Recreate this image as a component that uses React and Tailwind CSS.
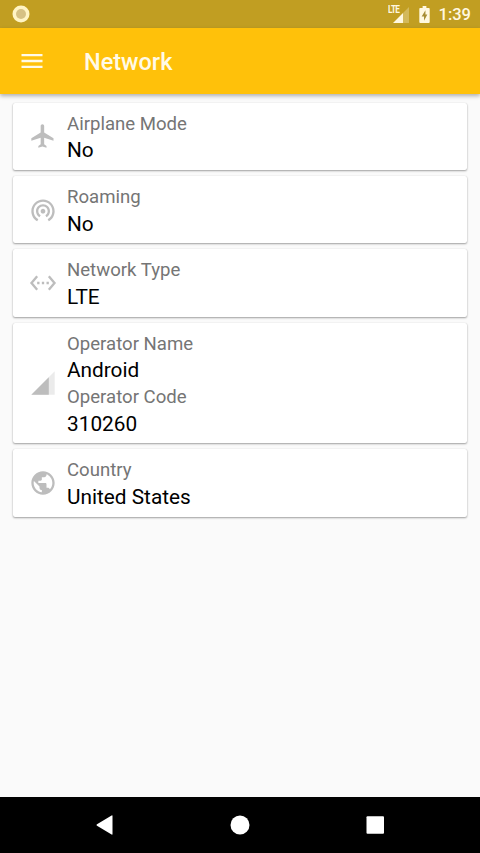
import React from 'react';

const ICONS = {
    airplane: 'M21 16v-2l-8-5V3.5c0-.83-.67-1.5-1.5-1.5S10 2.67 10 3.5V9l-8 5v2l8-2.5V19l-2 1.5V22l3.5-1 3.5 1v-1.5L13 19v-5.5l8 2.5z',
    tethering: 'M12 11c-1.1 0-2 .9-2 2s.9 2 2 2 2-.9 2-2-.9-2-2-2zm6 2c0-3.31-2.69-6-6-6s-6 2.69-6 6c0 2.22 1.21 4.15 3 5.19l1-1.74c-1.19-.7-2-1.97-2-3.45 0-2.21 1.79-4 4-4s4 1.79 4 4c0 1.48-.81 2.75-2 3.45l1 1.74c1.79-1.04 3-2.97 3-5.19zM12 3C6.48 3 2 7.48 2 13c0 3.7 2.01 6.92 4.99 8.65l1-1.73C5.61 18.53 4 15.96 4 13c0-4.42 3.58-8 8-8s8 3.58 8 8c0 2.96-1.61 5.53-4 6.92l1 1.73c2.99-1.73 5-4.95 5-8.65 0-5.52-4.48-10-10-10z',
    ethernet: 'M7.77 6.76L6.23 5.48.82 12l5.41 6.52 1.54-1.28L3.42 12l4.35-5.24zM7 13h2v-2H7v2zm10-2h-2v2h2v-2zm-6 2h2v-2h-2v2zm6.77-7.52l-1.54 1.28L20.58 12l-4.35 5.24 1.54 1.28L23.18 12l-5.41-6.52z',
    signal: 'M17 7L2 22h15z',
    globe: 'M12 2C6.48 2 2 6.48 2 12s4.48 10 10 10 10-4.48 10-10S17.52 2 12 2zm-1 17.93c-3.95-.49-7-3.85-7-7.93 0-.62.08-1.21.21-1.79L9 15v1c0 1.1.9 2 2 2v1.93zm6.9-2.54c-.26-.81-1-1.39-1.9-1.39h-1v-3c0-.55-.45-1-1-1H8v-2h2c.55 0 1-.45 1-1V7h2c1.1 0 2-.9 2-2v-.41c2.93 1.19 5 4.06 5 7.41 0 2.08-.8 3.97-2.1 5.39z',
};

const CARDS = [
    { icon: 'airplane', rows: [['Airplane Mode', 'No']] },
    { icon: 'tethering', rows: [['Roaming', 'No']] },
    { icon: 'ethernet', rows: [['Network Type', 'LTE']] },
    { icon: 'signal', rows: [['Operator Name', 'Android'], ['Operator Code', '310260']] },
    { icon: 'globe', rows: [['Country', 'United States']] },
];

const StatusBar = () => (
    <div className="h-7 shrink-0 bg-[#c19e22] flex items-center pl-3 pr-[9px] text-[#fff8e0]">
        <svg className="w-[18px] h-[18px]" viewBox="0 0 18 18">
            <circle cx="9" cy="9" r="8.5" fill="#fff4c4" />
            <circle cx="9" cy="9" r="5" fill="#d6c184" />
        </svg>
        <div className="ml-auto h-7 flex items-center">
            <span className="self-start w-[15px] mt-1 origin-left scale-x-[0.78] whitespace-nowrap text-[10.5px] leading-[11px] font-bold tracking-[-0.8px]">LTE</span>
            <svg className="-ml-[11px] mt-[2px] w-[18px] h-[17px]" viewBox="0 0 18 17">
                <path d="M13 4L17 0V16H11V6z" fill="currentColor" fillOpacity="0.3" />
                <path d="M1 16H11V6z" fill="currentColor" />
            </svg>
            <svg className="ml-[9px] w-[11px] h-[17px]" viewBox="0 0 11 18">
                <path d="M3.5 0h4v2H10a1 1 0 0 1 1 1v14a1 1 0 0 1-1 1H1a1 1 0 0 1-1-1V3a1 1 0 0 1 1-1h2.5z" fill="currentColor" />
                <path d="M6.5 4.5L2.5 11H5v4.5L8.5 9H6.500z" fill="#a78d34" />
            </svg>
            <span className="ml-[9px] mt-[2px] text-[16.5px] leading-7 font-medium">1:39</span>
        </div>
    </div>
);

const AppBar = () => (
    <div className="relative h-[66px] shrink-0 bg-[#ffc10a] flex items-center pl-[18px] shadow-[0_2px_4px_rgba(0,0,0,0.3)]">
        <svg className="w-7 h-7 text-[#fffae8]" viewBox="0 0 24 24" fill="currentColor">
            <path d="M3 18h18v-2H3v2zm0-5h18v-2H3v2zm0-7v2h18V6H3z" />
        </svg>
        <h1 className="ml-[38px] pt-[3px] text-[23.5px] font-medium text-[#fffae8]">Network</h1>
    </div>
);

const InfoCard = ({ icon, rows }) => (
    <div className="bg-white rounded-[2px] pt-2 pb-[6px] pl-4 flex items-center shadow-[0_1px_2px_rgba(0,0,0,0.36),0_0_1px_rgba(0,0,0,0.14)]">
        <svg className="-mt-[1.500px] w-7 h-7 text-[#bdbdbd]" viewBox="0 0 24 24" fill="currentColor">
            {icon === 'signal' && <path d="M2 22h20V2z" fillOpacity="0.3" />}
            <path d={ICONS[icon]} />
        </svg>
        <div className="ml-[10px]">
            {rows.map(([label, value]) => (
                <div key={label}>
                    <p className="text-[18.6px] leading-[26.67px] text-[#757575]">{label}</p>
                    <p className="text-[20.8px] leading-[26.67px] text-black">{value}</p>
                </div>
            ))}
        </div>
    </div>
);

const NavBar = () => (
    <div className="h-14 shrink-0 bg-black text-white flex items-center justify-between pl-[90px] pr-[91px]">
        <svg className="w-7 h-7" viewBox="0 0 28 28" fill="currentColor">
            <path d="M22.500 5v18a.6.6 0 0 1-.9.500L7 14.700a.8.8 0 0 1 0-1.400L21.600 4.500a.6.6 0 0 1 .9.500z" />
        </svg>
        <svg className="w-7 h-7" viewBox="0 0 28 28" fill="currentColor">
            <circle cx="14" cy="14" r="9.5" />
        </svg>
        <svg className="w-7 h-7" viewBox="0 0 28 28" fill="currentColor">
            <rect x="5.5" y="5.3" width="17.500" height="17.500" rx="1" />
        </svg>
    </div>
);

const App = () => (
    <div className="w-full h-[853px] flex flex-col overflow-hidden bg-[#fafafa] font-['Roboto',sans-serif]">
        <StatusBar />
        <AppBar />
        <div className="flex-1 flex flex-col gap-[6px] pt-[8.500px] px-[13px]">
            {CARDS.map(card => (
                <InfoCard key={card.icon} icon={card.icon} rows={card.rows} />
            ))}
        </div>
        <NavBar />
    </div>
);

export default App;
